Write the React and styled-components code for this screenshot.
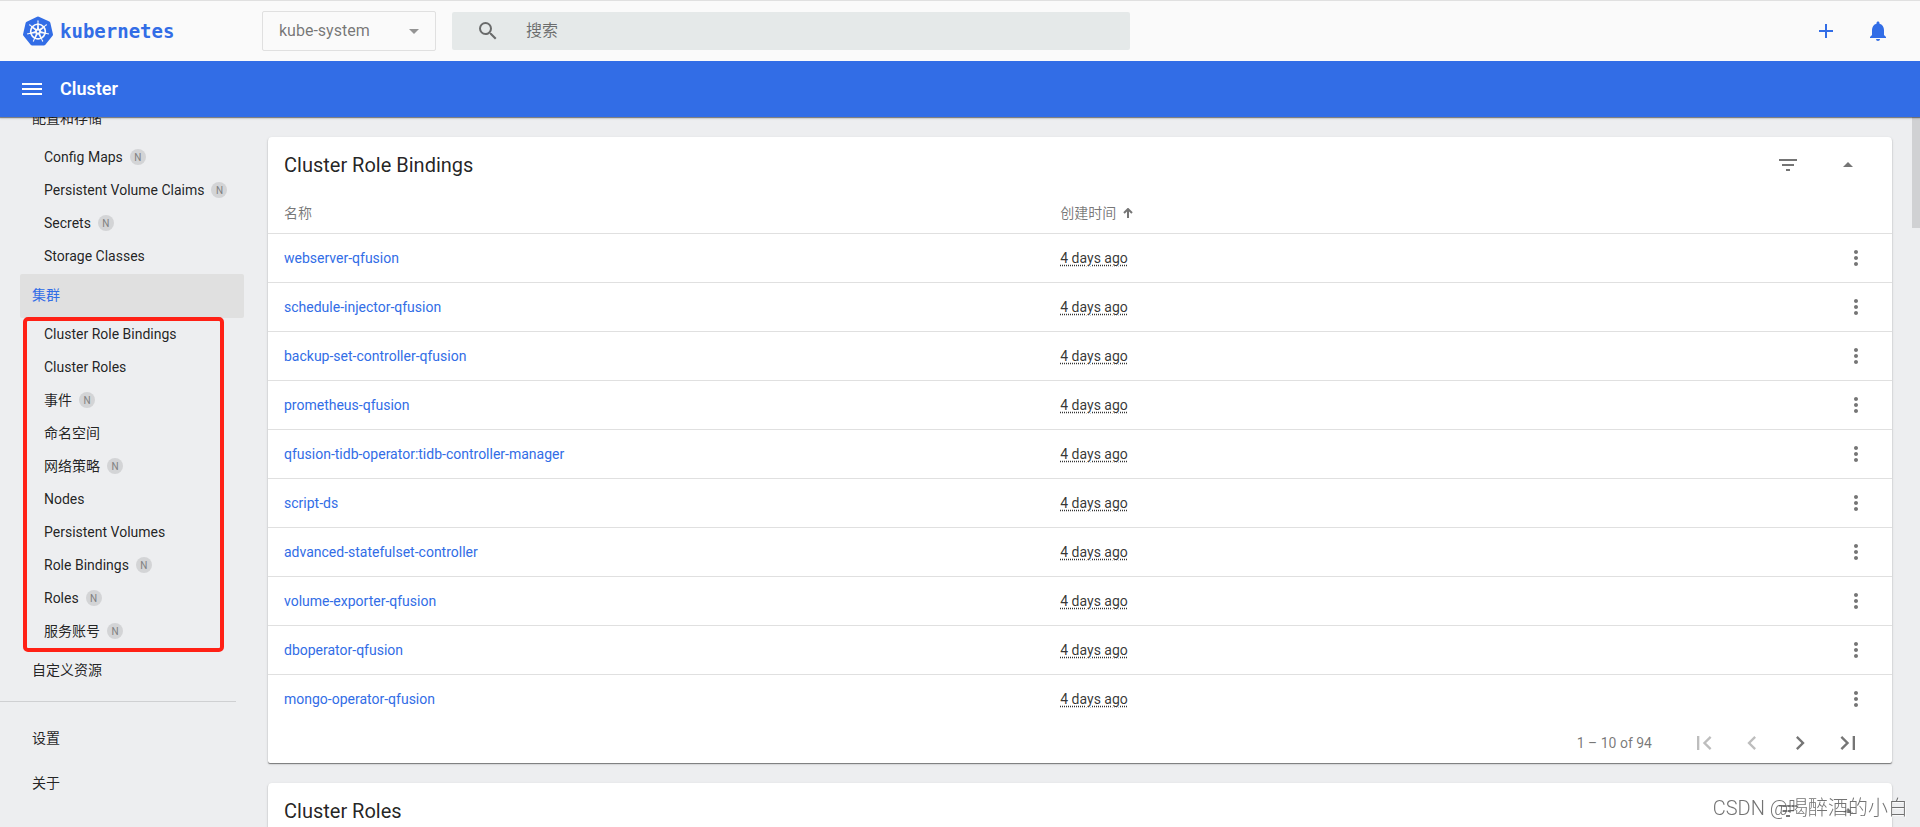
import React from 'react'
import styled, { createGlobalStyle, css } from 'styled-components'
import {
  MdAdd,
  MdArrowDropUp,
  MdChevronLeft,
  MdChevronRight,
  MdFilterList,
  MdFirstPage,
  MdLastPage,
  MdMoreVert,
  MdNotifications,
  MdSearch,
} from 'react-icons/md'
import { SiKubernetes } from 'react-icons/si'

const COLORS = {
  primary: '#326de6',
  page: '#edeef0',
  toolbar: '#fafafa',
  text: 'rgba(0, 0, 0, 0.87)',
  muted: 'rgba(0, 0, 0, 0.54)',
  line: '#e0e0e0',
  marker: '#ff2015',
}

const GlobalStyle = createGlobalStyle`
  * {
    box-sizing: border-box;
  }

  body {
    margin: 0;
    background: ${COLORS.page};
    color: ${COLORS.text};
    font-family: Roboto, "Noto Sans CJK SC", sans-serif;
    font-size: 14px;
    line-height: 20px;
  }

  button, input, select {
    font: inherit;
    color: inherit;
  }
`

const Page = styled.div`
  display: flex;
  flex-direction: column;
  height: 100vh;
  overflow: hidden;
`

/* top toolbar */

const Toolbar = styled.header`
  display: flex;
  align-items: center;
  flex: none;
  height: 61px;
  padding-right: 30px;
  border-top: 1px solid ${COLORS.line};
  background: ${COLORS.toolbar};
`

const Brand = styled.a`
  display: flex;
  align-items: center;
  gap: 7px;
  flex: none;
  width: 262px;
  padding-left: 23px;
  color: ${COLORS.primary};
  font-family: "DejaVu Sans Mono", monospace;
  font-size: 19px;
  font-weight: 700;
  text-decoration: none;
`

const NamespaceBox = styled.div`
  display: grid;
  align-items: center;
  flex: none;
  width: 174px;
  height: 40px;
  border: 1px solid ${COLORS.line};
  border-radius: 2px;
  color: ${COLORS.muted};
  font-size: 16px;

  select, svg {
    grid-area: 1 / 1;
  }

  select {
    height: 100%;
    padding: 0 40px 0 16px;
    border: 0;
    background: transparent;
    appearance: none;
  }

  svg {
    justify-self: end;
    margin-right: 16px;
    pointer-events: none;
  }
`

const SearchBox = styled.label`
  display: flex;
  align-items: center;
  gap: 26px;
  flex: 0 1 678px;
  height: 38px;
  margin-left: 16px;
  padding: 0 24px;
  border-radius: 2px;
  background: #e5e9e9;
  color: ${COLORS.muted};
  font-size: 16px;

  svg {
    flex: none;
  }

  input {
    flex: 1;
    min-width: 0;
    padding: 0;
    border: 0;
    outline: 0;
    background: transparent;
  }

  input::placeholder {
    color: ${COLORS.muted};
    opacity: 1;
  }
`

const ToolbarActions = styled.div`
  display: flex;
  gap: 28px;
  margin-left: auto;
`

const IconButton = styled.button`
  display: flex;
  align-items: center;
  justify-content: center;
  width: ${(p) => p.$size || 40}px;
  height: ${(p) => p.$size || 40}px;
  padding: 0;
  border: 0;
  background: transparent;
  color: ${(p) => (p.$primary ? COLORS.primary : COLORS.muted)};
  cursor: pointer;

  &:disabled {
    color: rgba(0, 0, 0, 0.26);
    cursor: default;
  }
`

const ActionBar = styled.div`
  position: relative;
  display: flex;
  align-items: center;
  gap: 16px;
  flex: none;
  height: 56px;
  padding-left: 20px;
  background: ${COLORS.primary};
  box-shadow: 0 1px 1px rgba(0, 0, 0, 0.42), 0 2px 2px rgba(0, 0, 0, 0.08);
  color: #fff;

  h1 {
    margin: 0;
    font-size: 18px;
    font-weight: 600;
    line-height: 22px;
  }

  button {
    color: #fff;
  }
`

const Body = styled.div`
  display: flex;
  flex: 1;
  min-height: 0;
`

/* side navigation */

const Sidebar = styled.nav`
  flex: none;
  width: 248px;
  overflow: hidden;
`

// scrolled down a little, so the first heading is partly under the bar
const NavScroll = styled.div`
  display: flex;
  flex-direction: column;
  gap: 1px;
  margin-top: -20px;
  padding: 0 4px 0 20px;
`

const NavLink = styled.a`
  display: flex;
  align-items: center;
  gap: 7px;
  height: 44px;
  padding: 0 12px 2px;
  border-radius: 2px;
  color: ${COLORS.text};
  text-decoration: none;
  white-space: nowrap;

  ${(p) => p.$active && css`
    background: ${COLORS.line};
    color: ${COLORS.primary};
  `}

  ${(p) => p.$sub && css`
    height: 33px;
    padding: 0 12px 2px 24px;
  `}
`

const SubList = styled.ul`
  position: relative;
  margin: 0;
  padding: 0;
  list-style: none;

  ${(p) => p.$marked && css`
    &::after {
      content: "";
      position: absolute;
      inset: -1px 20px -4px 3px;
      border: 4px solid ${COLORS.marker};
      border-radius: 5px;
      pointer-events: none;
    }
  `}
`

const Badge = styled.span`
  flex: none;
  width: 16px;
  height: 16px;
  border-radius: 50%;
  background: #d3d4d6;
  color: #808182;
  font-size: 10px;
  line-height: 17px;
  text-align: center;
`

const Divider = styled.hr`
  width: 236px;
  height: 1px;
  margin: 7px 0 14px -20px;
  border: 0;
  background: #cfd0d2;
`

/* content */

const Content = styled.main`
  display: flex;
  flex-direction: column;
  gap: 20px;
  flex: 1;
  min-width: 0;
  padding: 20px 20px 0;
  overflow: hidden;
`

const ScrollTrack = styled.div`
  flex: none;
  width: 8px;
`

const ScrollThumb = styled.div`
  height: 111px;
  background: #d0d1d3;
`

const Card = styled.section`
  flex: none;
  border-radius: 4px 4px 2px 2px;
  background: #fff;
  box-shadow: 0 1px 1px rgba(0, 0, 0, 0.46), 0 1px 3px rgba(0, 0, 0, 0.12);
`

const CardHeader = styled.div`
  display: flex;
  align-items: center;
  gap: 20px;
  height: 56px;
  padding: 0 24px 0 16px;

  h2 {
    flex: 1;
    margin: 0;
    font-size: 20px;
    font-weight: 400;
    line-height: 28px;
  }
`

const Table = styled.table`
  width: 100%;
  border-collapse: collapse;
  table-layout: fixed;

  th, td {
    height: 49px;
    padding: 0 16px;
    border-bottom: 1px solid ${COLORS.line};
    text-align: left;
  }

  th {
    height: 40px;
    color: ${COLORS.muted};
    font-weight: 400;
  }

  th:first-child {
    width: 47.8%;
  }

  th:last-child {
    width: 72px;
  }

  tbody tr:last-child td {
    border-bottom: 0;
  }

  td a {
    color: ${COLORS.primary};
    text-decoration: none;
  }

  time {
    color: rgba(0, 0, 0, 0.8);
    text-decoration: underline dotted;
    text-underline-offset: 2px;
  }
`

const SortButton = styled.button`
  display: flex;
  align-items: center;
  gap: 7px;
  padding: 0;
  border: 0;
  background: transparent;
`

const Paginator = styled.div`
  display: flex;
  align-items: center;
  justify-content: flex-end;
  height: 40px;
  padding: 0 20px 1px 0;
  color: ${COLORS.muted};

  span {
    margin-right: 28px;
  }

  ${IconButton} {
    width: 48px;
    height: 38px;
  }
`

const Watermark = styled.div`
  position: fixed;
  right: 12px;
  bottom: 5px;
  color: rgba(90, 90, 90, 0.85);
  font-size: 20px;
  font-weight: 300;
  line-height: 28px;
  text-shadow: 1px 1px 0 rgba(255, 255, 255, 0.7);
`

const storageItems = [
  { label: 'Config Maps', namespaced: true },
  { label: 'Persistent Volume Claims', namespaced: true },
  { label: 'Secrets', namespaced: true },
  { label: 'Storage Classes' },
]

const clusterItems = [
  { label: 'Cluster Role Bindings' },
  { label: 'Cluster Roles' },
  { label: '事件', namespaced: true },
  { label: '命名空间' },
  { label: '网络策略', namespaced: true },
  { label: 'Nodes' },
  { label: 'Persistent Volumes' },
  { label: 'Role Bindings', namespaced: true },
  { label: 'Roles', namespaced: true },
  { label: '服务账号', namespaced: true },
]

const bindings = [
  'webserver-qfusion',
  'schedule-injector-qfusion',
  'backup-set-controller-qfusion',
  'prometheus-qfusion',
  'qfusion-tidb-operator:tidb-controller-manager',
  'script-ds',
  'advanced-statefulset-controller',
  'volume-exporter-qfusion',
  'dboperator-qfusion',
  'mongo-operator-qfusion',
]

const NavItems = ({ items, marked }) => (
  <SubList $marked={marked}>
    {items.map((item) => (
      <li key={item.label}>
        <NavLink href="#" $sub>
          {item.label}
          {item.namespaced && <Badge>N</Badge>}
        </NavLink>
      </li>
    ))}
  </SubList>
)

const CardTitle = ({ title }) => (
  <CardHeader>
    <h2>{title}</h2>
    <IconButton aria-label="Filter"><MdFilterList size={24} /></IconButton>
    <IconButton aria-label="Collapse"><MdArrowDropUp size={24} /></IconButton>
  </CardHeader>
)

const App = () => {
  return (
    <Page>
      <GlobalStyle />
      <Toolbar>
        <Brand href="#">
          <SiKubernetes size={30} />
          kubernetes
        </Brand>
        <NamespaceBox>
          <select aria-label="Namespace" defaultValue="kube-system">
            <option>kube-system</option>
          </select>
          <svg width="10" height="5" viewBox="0 0 10 5" fill="#949494">
            <path d="M0 0h10L5 5z" />
          </svg>
        </NamespaceBox>
        <SearchBox>
          <MdSearch size={24} />
          <input type="text" placeholder="搜索" aria-label="搜索" />
        </SearchBox>
        <ToolbarActions>
          <IconButton $size={24} $primary aria-label="Create"><MdAdd size={24} /></IconButton>
          <IconButton $size={24} $primary aria-label="Notifications"><MdNotifications size={24} /></IconButton>
        </ToolbarActions>
      </Toolbar>

      <ActionBar>
        <IconButton $size={24} aria-label="Menu">
          <svg width="24" height="24" viewBox="0 0 24 24" fill="currentColor">
            <path d="M2 6h20v2H2zM2 11h20v2H2zM2 16h20v2H2z" />
          </svg>
        </IconButton>
        <h1>Cluster</h1>
      </ActionBar>

      <Body>
        <Sidebar>
          <NavScroll>
            <div>
              <NavLink href="#">配置和存储</NavLink>
              <NavItems items={storageItems} />
            </div>
            <div>
              <NavLink href="#" $active>集群</NavLink>
              <NavItems items={clusterItems} marked />
            </div>
            <NavLink href="#">自定义资源</NavLink>
            <Divider />
            <NavLink href="#">设置</NavLink>
            <NavLink href="#">关于</NavLink>
          </NavScroll>
        </Sidebar>

        <Content>
          <Card>
            <CardTitle title="Cluster Role Bindings" />
            <Table>
              <thead>
                <tr>
                  <th>名称</th>
                  <th>
                    <SortButton>
                      创建时间
                      <svg width="10" height="10" viewBox="0 0 10 10" fill="none" stroke="currentColor" strokeWidth="2">
                        <path d="M5 10V1M1 5l4-4 4 4" />
                      </svg>
                    </SortButton>
                  </th>
                  <th aria-label="Actions" />
                </tr>
              </thead>
              <tbody>
                {bindings.map((name) => (
                  <tr key={name}>
                    <td><a href="#">{name}</a></td>
                    <td><time>4 days ago</time></td>
                    <td><IconButton aria-label="More"><MdMoreVert size={24} /></IconButton></td>
                  </tr>
                ))}
              </tbody>
            </Table>
            <Paginator>
              <span>1 – 10 of 94</span>
              <IconButton disabled aria-label="First page"><MdFirstPage size={28} /></IconButton>
              <IconButton disabled aria-label="Previous page"><MdChevronLeft size={28} /></IconButton>
              <IconButton aria-label="Next page"><MdChevronRight size={28} /></IconButton>
              <IconButton aria-label="Last page"><MdLastPage size={28} /></IconButton>
            </Paginator>
          </Card>
          <Card>
            <CardTitle title="Cluster Roles" />
          </Card>
        </Content>
        <ScrollTrack>
          <ScrollThumb />
        </ScrollTrack>
      </Body>
      <Watermark>CSDN @喝醉酒的小白</Watermark>
    </Page>
  )
}

export default App
